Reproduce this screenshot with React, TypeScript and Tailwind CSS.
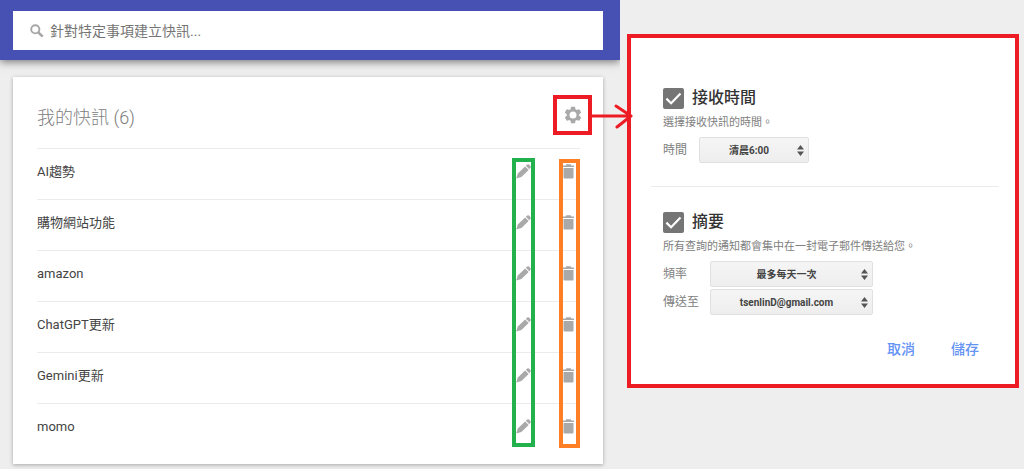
import { ReactNode } from "react";

const alerts = [
  "AI趨勢",
  "購物網站功能",
  "amazon",
  "ChatGPT更新",
  "Gemini更新",
  "momo",
];

const SearchIcon = () => (
  <svg viewBox="0 0 14 14" className="size-3.5 shrink-0" fill="none" stroke="#a6a6a6">
    <circle cx="5.3" cy="5.3" r="4.1" strokeWidth="1.9" />
    <path d="M8.3 8.3l4.4 4.4" strokeWidth="2.6" />
  </svg>
);

const GearIcon = () => (
  <svg viewBox="0 0 24 24" className="size-5" fill="#a9a9a9">
    <path d="M19.43 12.98c.04-.32.07-.64.07-.98s-.03-.66-.07-.98l2.11-1.65c.19-.15.24-.42.12-.64l-2-3.46c-.12-.22-.39-.3-.61-.22l-2.49 1c-.52-.4-1.08-.73-1.69-.98l-.38-2.65C14.46 2.18 14.25 2 14 2h-4c-.25 0-.46.18-.49.42l-.38 2.65c-.61.25-1.17.59-1.69.98l-2.49-1c-.23-.09-.49 0-.61.22l-2 3.46c-.13.22-.07.49.12.64l2.11 1.65c-.04.32-.07.65-.07.98s.03.66.07.98l-2.11 1.65c-.19.15-.24.42-.12.64l2 3.46c.12.22.39.3.61.22l2.49-1c.52.4 1.08.73 1.69.98l.38 2.65c.03.24.24.42.49.42h4c.25 0 .46-.18.49-.42l.38-2.65c.61-.25 1.17-.59 1.69-.98l2.49 1c.23.09.49 0 .61-.22l2-3.46c.12-.22.07-.49-.12-.64l-2.11-1.65zM12 16.2a4.2 4.2 0 1 1 0-8.4 4.2 4.2 0 0 1 0 8.4z" />
  </svg>
);

const PencilIcon = () => (
  <svg viewBox="0 0 15 15" className="size-[15px]" fill="#a9a9a9">
    <path d="M.2 14.6l1.6-5.2 7.3-6.9 3.6 3.6-7.3 6.9z" />
    <path d="M9.9 1.8L11.2.6q.9-.8 1.8 0l1.4 1.4q.8.9 0 1.8l-1.1 1.5z" />
  </svg>
);

const TrashIcon = () => (
  <svg viewBox="0 0 11 15" className="h-[15px] w-[11px]" fill="#a9a9a9">
    <path d="M0 1.4h2.6L3.4.2h4.2l.8 1.2H11V3H0z" />
    <path d="M.5 4h10v9.5q0 1-1 1h-8q-1 0-1-1z" />
  </svg>
);

const CheckOption = ({ id, label }: { id: string; label: string }) => (
  <div className="flex h-6 items-center gap-2">
    <div className="relative size-[21px]">
      <input
        id={id}
        type="checkbox"
        defaultChecked
        className="peer block size-full appearance-none rounded-xs border-2 border-[#757575] checked:bg-[#757575]"
      />
      <svg
        viewBox="0 0 21 21"
        className="pointer-events-none absolute inset-0 hidden peer-checked:block"
        fill="none"
        stroke="#fff"
        strokeWidth="2.2"
      >
        <path d="M3.4 10.6l4.7 4.6 9.4-9.6" />
      </svg>
    </div>
    <label htmlFor={id} className="text-base font-medium text-[#333]">
      {label}
    </label>
  </div>
);

const SelectField = ({
  id,
  label,
  labelClass,
  selectClass,
  options,
}: {
  id: string;
  label: string;
  labelClass: string;
  selectClass: string;
  options: string[];
}) => (
  <div className="flex items-center">
    <label htmlFor={id} className={`text-xs text-[#808080] ${labelClass}`}>
      {label}
    </label>
    <div className={`relative ${selectClass}`}>
      <select
        id={id}
        className="block h-[26px] w-full appearance-none rounded-xs border border-[#e0e0e0] bg-linear-to-b from-[#f5f5f5] to-[#eeeeee] pr-2.5 text-center text-[10px] font-bold text-[#444] [text-align-last:center]"
      >
        {options.map((option) => (
          <option key={option}>{option}</option>
        ))}
      </select>
      <svg
        viewBox="0 0 7 11"
        className="pointer-events-none absolute top-2 right-[5px] h-[11px] w-[7px]"
        fill="#555"
      >
        <path d="M3.5 0L7 4.4H0zM3.5 11L7 6.6H0z" />
      </svg>
    </div>
  </div>
);

const TextButton = ({ children }: { children: ReactNode }) => (
  <button type="button" className="text-sm font-medium text-[#6493f5]">
    {children}
  </button>
);

export default function App() {
  return (
    <main className="grid grid-cols-[620fr_404fr] items-start bg-[#eee] font-[Roboto,'Noto_Sans_CJK_TC',sans-serif]">
      <div className="min-w-0 pb-[5px]">
        <header className="bg-[#4751b3] pt-[11px] pr-[17px] pb-[10px] pl-[13px] shadow-[0_2px_8px_rgba(0,0,0,0.5)] [clip-path:inset(0_0_-16px_0)]">
          <div className="flex h-[39px] items-center gap-1.5 bg-white px-[17px]">
            <SearchIcon />
            <input
              type="text"
              aria-label="針對特定事項建立快訊"
              placeholder="針對特定事項建立快訊..."
              className="min-w-0 flex-1 text-sm text-[#444] outline-none placeholder:text-[#757575]"
            />
          </div>
        </header>

        <section className="mt-[17px] mr-[17px] ml-[13px] bg-white pr-[23px] pb-[10px] pl-6 shadow-[0_1px_4px_rgba(0,0,0,0.3)]">
          <div className="flex h-[71px] items-center justify-between pt-[5px]">
            <h1 className="pt-1.5 text-lg font-light text-[#808080]">我的快訊 (6)</h1>
            <div className="relative -mr-3 flex h-10 w-[39px] items-center justify-center border-4 border-[#ed1c24]">
              <button type="button" aria-label="設定">
                <GearIcon />
              </button>
              <svg
                viewBox="0 0 42 26"
                className="pointer-events-none absolute top-1 left-[34px] z-10 h-[26px] w-[42px]"
                fill="none"
                stroke="#ed1c24"
                strokeWidth="3"
                strokeLinecap="round"
                strokeLinejoin="round"
              >
                <path d="M1 13h39M25 3l15 10-14 11" />
              </svg>
            </div>
          </div>

          <div className="relative">
            <ul>
              {alerts.map((alert) => (
                <li
                  key={alert}
                  className="flex h-[51px] items-center border-t border-[#ebebeb] pb-[5px]"
                >
                  <span className="flex-1 text-[13px] text-[#444]">{alert}</span>
                  <button type="button" aria-label={`編輯 ${alert}`} className="mr-8">
                    <PencilIcon />
                  </button>
                  <button type="button" aria-label={`刪除 ${alert}`} className="mr-1.5">
                    <TrashIcon />
                  </button>
                </li>
              ))}
            </ul>
            <div className="pointer-events-none absolute top-2.5 right-[45px] bottom-[7px] w-[23px] border-4 border-[#22b14c]" />
            <div className="pointer-events-none absolute top-[11px] right-0 bottom-1.5 w-[21px] border-4 border-[#ff7f27]" />
          </div>
        </section>
      </div>

      <div className="min-w-0 pt-[34px] pr-[5px] pl-[7px]">
        <form className="border-4 border-[#ed1c24] bg-white px-5 pt-12 pb-[25px]">
          <div className="px-3">
            <CheckOption id="delivery" label="接收時間" />
            <p className="mt-[3px] text-[11px] leading-5 text-[#808080]">選擇接收快訊的時間。</p>
            <div className="mt-1">
              <SelectField
                id="time"
                label="時間"
                labelClass="w-9"
                selectClass="w-[110px]"
                options={["清晨6:00"]}
              />
            </div>
          </div>
          <hr className="my-[23px] -mr-1 border-[#ebebeb]" />
          <div className="px-3">
            <CheckOption id="digest" label="摘要" />
            <p className="mt-[3px] text-[11px] leading-5 text-[#808080]">
              所有查詢的通知都會集中在一封電子郵件傳送給您。
            </p>
            <div className="mt-1 flex flex-col gap-0.5">
              <SelectField
                id="frequency"
                label="頻率"
                labelClass="w-[47px]"
                selectClass="w-[163px]"
                options={["最多每天一次"]}
              />
              <SelectField
                id="recipient"
                label="傳送至"
                labelClass="w-[47px]"
                selectClass="w-[163px]"
                options={["tsenlinD@gmail.com"]}
              />
            </div>
          </div>
          <div className="mt-6 flex justify-end gap-9 pr-4">
            <TextButton>取消</TextButton>
            <TextButton>儲存</TextButton>
          </div>
        </form>
      </div>
    </main>
  );
}
